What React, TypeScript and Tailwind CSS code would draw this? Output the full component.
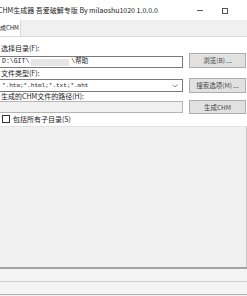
import React from 'react';

const cjk = "font-['Noto_Sans_CJK_SC','Noto_Sans',sans-serif]";

const Btn = ({ label, h = 'h-[15px]' }: { label: string; h?: string }) => (
  <button
    className={`w-[57px] ${h} shrink-0 bg-[#e1e1e1] border border-[#adadad] text-[6.5px] leading-none text-[#444] flex items-center justify-center`}
  >
    {label}
  </button>
);

const App = () => {
  return (
    <div className={`w-[247px] h-[296px] overflow-hidden bg-white flex flex-col ${cjk} text-[#1a1a1a]`}>
      {/* Title bar */}
      <div className="h-[20px] shrink-0 flex items-center bg-white relative">
        <span className="text-[7px] leading-none whitespace-nowrap -ml-[2px] text-[#222]">
          CHM生成器 吾爱破解专版 By milaoshu1020 1.0.0.0
        </span>
        <div className="absolute left-[197px] top-[10px] w-[6px] h-px bg-[#555]" />
        <div className="absolute left-[222px] top-[8px] w-[6px] h-[6px] border border-[#555]" />
      </div>

      {/* Tab strip */}
      <div className="h-[17px] shrink-0 bg-[#f0f0f0] flex items-end border-b border-[#dadada]">
        <div className="w-[21px] h-[16px] bg-white border-r border-[#d9d9d9] overflow-hidden flex items-center justify-end pr-[1px]">
          <span className="text-[6px] leading-none whitespace-nowrap">生成CHM</span>
        </div>
      </div>

      {/* Tab page */}
      <div className="shrink-0 bg-white pt-[7px] flex flex-col">
        <div className="h-[9px] flex items-center pl-[1px] text-[7px] leading-none">选择目录(F):</div>
        <div className="h-[15px] flex items-end gap-[6px]">
          <div className="w-[183px] h-[12px] border border-[#7a7a7a] border-l-0 bg-white flex items-center pl-[2px] text-[6.5px] leading-none font-['Liberation_Mono','Noto_Sans_CJK_SC',monospace]">
            D:\GIT\<span className="inline-block w-[38px] h-[7px] bg-[#e6e6e6] mx-[2px]" />\帮助
          </div>
          <Btn label="浏览(B) ..." />
        </div>

        <div className="h-[10px] flex items-center pl-[1px] text-[7px] leading-none">文件类型(F):</div>
        <div className="h-[15px] flex items-center gap-[6px]">
          <div className="w-[183px] h-[13px] border border-[#7a7a7a] border-l-0 bg-white flex items-center justify-between pl-[2px] pr-[4px] text-[6px] leading-none font-['Liberation_Mono',monospace]">
            <span>*.htm;*.html;*.txt;*.mht</span>
            <svg width="6" height="4" viewBox="0 0 6 4">
              <path d="M0.5 0.5 L3 3 L5.5 0.5" fill="none" stroke="#777" strokeWidth="0.8" />
            </svg>
          </div>
          <Btn label="搜索选项(M) ..." />
        </div>

        <div className="h-[7px] flex items-center pl-[1px] text-[7px] leading-none">生成的CHM文件的路径(H):</div>
        <div className="h-[14px] flex items-center gap-[6px]">
          <div className="w-[183px] h-[12px] border border-[#b5b5b5] border-l-0 bg-[#f0f0f0]" />
          <Btn label="生成CHM" h="h-[14px]" />
        </div>

        <div className="h-[10px] flex items-center gap-[3px] pl-[2px]">
          <div className="w-[8px] h-[8px] border border-[#333] bg-white" />
          <span className="text-[7px] leading-none">包括所有子目录(S)</span>
        </div>
        <div className="h-[2px]" />
      </div>

      {/* Empty panel */}
      <div className="flex-1 bg-[#f0f0f0] border-t border-[#e3e3e3] border-r border-r-[#c8c8c8]" />

      {/* Status strips */}
      <div className="shrink-0 border-t-2 border-[#a3a3a3] h-[14px] bg-[#f4f4f4]" />
      <div className="shrink-0 border-t border-[#cfcfcf] h-[13px] bg-[#f4f4f4]" />
      <div className="shrink-0 border-t border-[#b4b4b4] h-[2px] bg-[#f4f4f4]" />
    </div>
  );
};

export default App;
